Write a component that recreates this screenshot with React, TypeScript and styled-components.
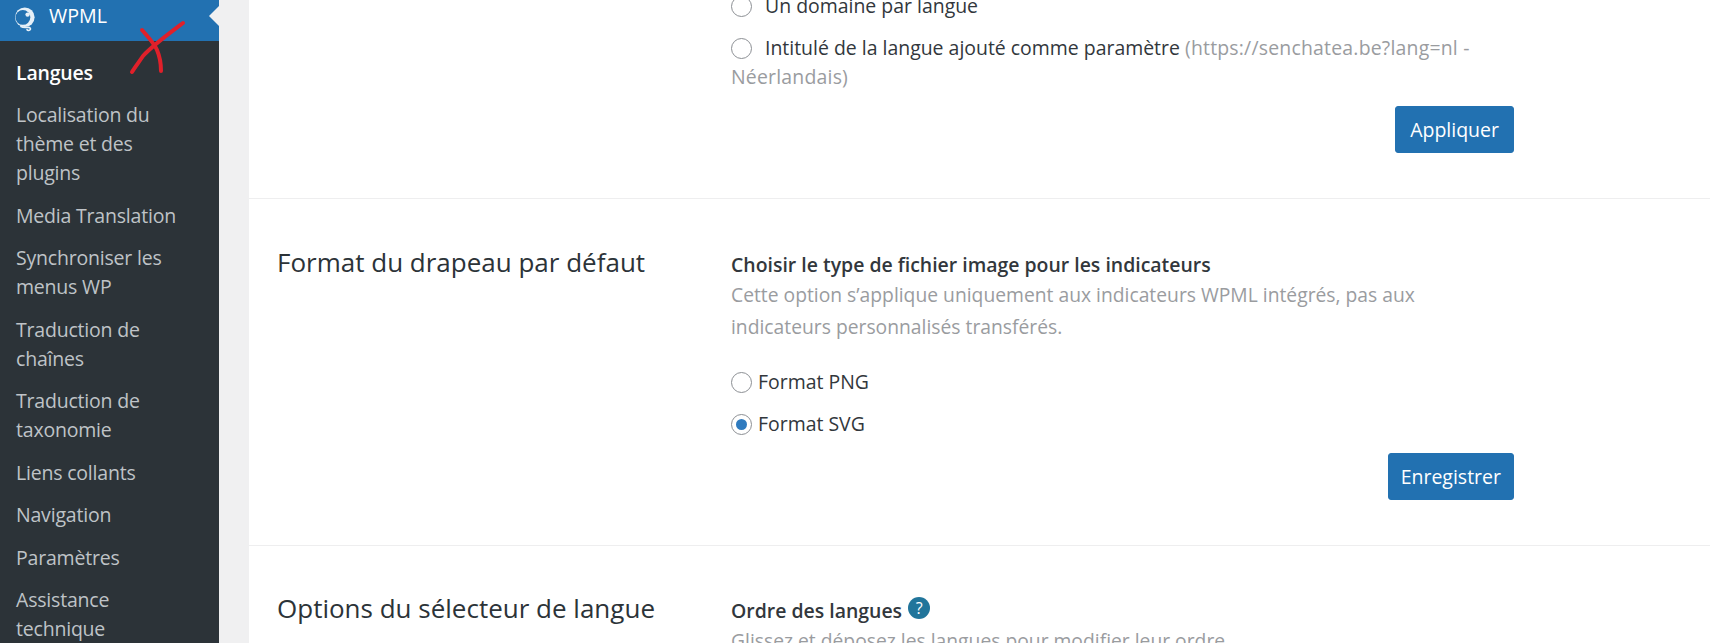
import React from "react";
import styled, { createGlobalStyle } from "styled-components";

const GlobalStyle = createGlobalStyle`
  html, body {
    margin: 0;
    height: 100%;
    overflow: hidden;
    background: #f0f0f1;
  }
  body {
    font-family: "Open Sans", "Noto Sans", "Liberation Sans", sans-serif;
    color: #2c3338;
  }
`;

const Shell = styled.div`
  position: relative;
  display: flex;
  height: 643px;
  overflow: hidden;
`;

const Sidebar = styled.nav`
  flex: 0 0 219px;
  background: #2c3338;
`;

const MenuHead = styled.div`
  position: relative;
  display: flex;
  align-items: center;
  gap: 13px;
  height: 41px;
  padding: 0 0 9px 14px;
  box-sizing: border-box;
  background: #2271b1;
  color: #fff;
  font-size: 19.7px;
  line-height: 32px;

  &::after {
    content: "";
    position: absolute;
    right: 0;
    top: 6px;
    border: 10px solid transparent;
    border-right-color: #f0f0f1;
    border-left-width: 0;
  }
`;

const LogoMark = styled.svg`
  margin-top: 6px;
  flex-shrink: 0;
`;

const SubMenu = styled.ul`
  list-style: none;
  margin: 0;
  padding: 10px 30px 0 16px;
`;

const SubItem = styled.li<{ $current?: boolean }>`
  padding: 6.75px 0;
  font-size: 19.5px;
  line-height: 29px;
  letter-spacing: -0.2px;
  color: ${(p) => (p.$current ? "#fff" : "#bfc3c7")};
  font-weight: ${(p) => (p.$current ? 600 : 400)};
`;

const Main = styled.main`
  flex: 1;
  min-width: 0;
  padding-left: 30px;
`;

const Panel = styled.div`
  background: #fff;
  height: 643px;
  overflow: hidden;
`;

const Section = styled.section<{ $offset?: number; $pad: number }>`
  display: grid;
  grid-template-columns: 454px 783px;
  margin-top: ${(p) => p.$offset ?? 0}px;
  padding: ${(p) => p.$pad}px 0 45px 28px;
  border-bottom: 1px solid #eeeeef;
`;

const SectionTitle = styled.h2`
  margin: -2px 0 0;
  font-size: 26px;
  font-weight: 400;
  line-height: 29px;
  color: #2c3338;
`;

const Field = styled.div`
  display: flex;
  flex-direction: column;
`;

const Label = styled.div`
  display: flex;
  align-items: center;
  gap: 7px;
  font-size: 19.45px;
  font-weight: 600;
  line-height: 29px;
  color: #32373c;
`;

const Hint = styled.p`
  margin: 0 0 24px;
  max-width: 730px;
  font-size: 19.3px;
  line-height: 32px;
  color: #9a9c9f;
`;

const Option = styled.label`
  display: block;
  font-size: 19.45px;
  line-height: 29px;
  color: #32373c;
  margin-bottom: 13px;
`;

const Radio = styled.span<{ $gap: number; $checked?: boolean }>`
  display: inline-block;
  position: relative;
  box-sizing: border-box;
  width: 21px;
  height: 21px;
  margin-right: ${(p) => p.$gap}px;
  vertical-align: -4px;
  border: 1px solid #8c8f94;
  border-radius: 50%;
  background: #fff;

  &::before {
    content: "";
    display: ${(p) => (p.$checked ? "block" : "none")};
    position: absolute;
    left: 4px;
    top: 4px;
    width: 11px;
    height: 11px;
    border-radius: 50%;
    background: #2f7bbf;
  }
`;

const Muted = styled.span`
  color: #9a9c9f;
  letter-spacing: 0.2px;
`;

const Actions = styled.div`
  display: flex;
  justify-content: flex-end;
  margin-top: 2px;
`;

const Button = styled.button<{ $inset: number }>`
  height: 47px;
  padding: 0 ${(p) => p.$inset}px;
  border: 1px solid #2271b1;
  border-radius: 3px;
  background: #2271b1;
  color: #fff;
  font: inherit;
  font-size: 19.5px;
`;

const HelpBadge = styled.span`
  display: inline-flex;
  align-items: center;
  justify-content: center;
  width: 22px;
  height: 22px;
  margin-top: -5px;
  margin-left: -1px;
  border-radius: 50%;
  background: #21759b;
  color: #fff;
  font-size: 16px;
  font-weight: 400;
  line-height: 1;
`;

const Scribble = styled.svg`
  position: absolute;
  left: 125px;
  top: 18px;
  width: 65px;
  height: 60px;
  overflow: visible;
`;

const WpmlIcon = () => (
  <LogoMark width="22" height="25" viewBox="0 0 22 25" fill="none">
    <circle cx="10.8" cy="10.2" r="9.8" fill="#e6f0f8" />
    <circle cx="8.9" cy="10.4" r="7.4" fill="#2271b1" />
    <circle cx="13.6" cy="7.6" r="2.2" fill="#e6f0f8" />
    <path
      d="M7 19.5c2.2 1.4 4.4 1 7 .8 2-.1 2.8 1.1 2.3 2.2-.6 1.3-2.7 1.3-3.3.2"
      stroke="#e6f0f8"
      strokeWidth="1.7"
      strokeLinecap="round"
    />
  </LogoMark>
);

const menuItems = [
  "Localisation du thème et des plugins",
  "Media Translation",
  "Synchroniser les menus WP",
  "Traduction de chaînes",
  "Traduction de taxonomie",
  "Liens collants",
  "Navigation",
  "Paramètres",
  "Assistance technique",
];

const App = () => {
  return (
    <Shell>
      <GlobalStyle />
      <Sidebar>
        <MenuHead>
          <WpmlIcon />
          WPML
        </MenuHead>
        <SubMenu>
          <SubItem $current>Langues</SubItem>
          {menuItems.map((item) => (
            <SubItem key={item}>{item}</SubItem>
          ))}
        </SubMenu>
      </Sidebar>
      <Main>
        <Panel>
          <Section $offset={-9} $pad={0}>
            <div />
            <Field>
              <Option>
                <Radio $gap={13} />
                Un domaine par langue
              </Option>
              <Option>
                <Radio $gap={13} />
                Intitulé de la langue ajouté comme paramètre{" "}
                <Muted>(https://senchatea.be?lang=nl - Néerlandais)</Muted>
              </Option>
              <Actions>
                <Button $inset={14}>Appliquer</Button>
              </Actions>
            </Field>
          </Section>
          <Section $pad={51}>
            <SectionTitle>Format du drapeau par défaut</SectionTitle>
            <Field>
              <Label>Choisir le type de fichier image pour les indicateurs</Label>
              <Hint>
                Cette option s’applique uniquement aux indicateurs WPML intégrés, pas aux indicateurs
                personnalisés transférés.
              </Hint>
              <Option>
                <Radio $gap={6} />
                Format PNG
              </Option>
              <Option>
                <Radio $gap={6} $checked />
                Format SVG
              </Option>
              <Actions>
                <Button $inset={12}>Enregistrer</Button>
              </Actions>
            </Field>
          </Section>
          <Section $pad={50}>
            <SectionTitle>Options du sélecteur de langue</SectionTitle>
            <Field>
              <Label>
                Ordre des langues
                <HelpBadge>?</HelpBadge>
              </Label>
              <Hint>Glissez et déposez les langues pour modifier leur ordre</Hint>
            </Field>
          </Section>
        </Panel>
      </Main>
      <Scribble viewBox="0 0 65 60" fill="none">
        <path
          d="M58 5C42 17 27 28 18 38C14 44 10 49 7 54"
          stroke="#e0202a"
          strokeWidth="4"
          strokeLinecap="round"
        />
        <path
          d="M17 12C23 19 29 25 32 32C35 39 36 46 36 53"
          stroke="#e0202a"
          strokeWidth="4"
          strokeLinecap="round"
        />
      </Scribble>
    </Shell>
  );
};

export default App;
